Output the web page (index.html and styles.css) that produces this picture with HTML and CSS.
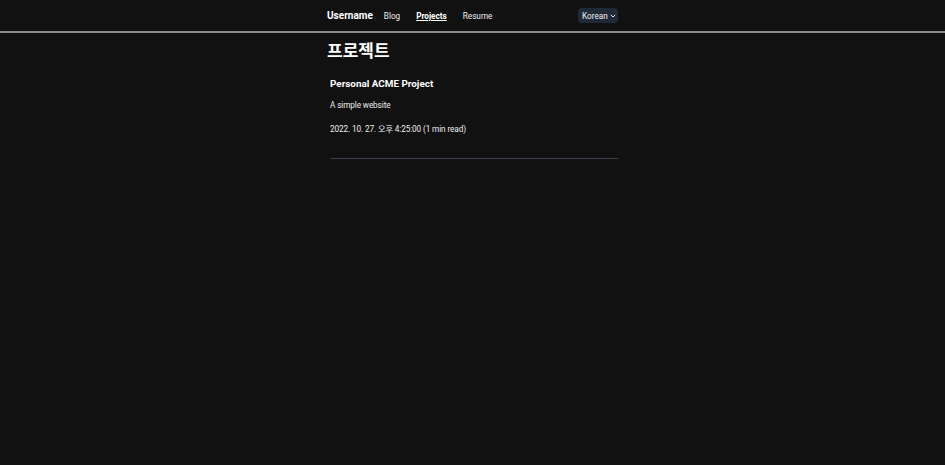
FILE: index.html
```html
<!DOCTYPE html>
<html lang="ko">
<head>
<meta charset="utf-8">
<title>Projects</title>
<link rel="stylesheet" href="styles.css">
</head>
<body>
<header class="header">
  <nav class="nav">
    <div class="nav-left">
      <a class="brand" href="#">Username</a>
      <a class="link" href="#">Blog</a>
      <a class="link active" href="#">Projects</a>
      <a class="link" href="#">Resume</a>
    </div>
    <div class="lang">
      <span>Korean</span>
      <svg class="chev" width="6" height="4" viewBox="0 0 6 4"><path d="M0.8 0.8 L3 3 L5.2 0.8" fill="none" stroke="#e5e7eb" stroke-width="1"/></svg>
    </div>
  </nav>
</header>
<main class="main">
  <h1 class="title">프로젝트</h1>
  <article class="card">
    <h2 class="card-title">Personal ACME Project</h2>
    <p class="desc">A simple website</p>
    <p class="date">2022. 10. 27. 오후 4:25:00 (1 min read)</p>
  </article>
</main>
</body>
</html>
```
FILE: styles.css
```css
* { box-sizing: border-box; }
html, body { margin: 0; padding: 0; }
body {
  background: #111111;
  color: #ececec;
  font-family: Roboto, "Noto Sans CJK KR", sans-serif;
  min-height: 465px;
}
a { color: inherit; text-decoration: none; }
.header {
  border-bottom: 2px solid #8a8a8a;
}
.nav {
  width: 291px;
  margin: 0 auto;
  height: 31px;
  display: flex;
  align-items: center;
  justify-content: space-between;
}
.nav-left { display: flex; align-items: center; }
.brand {
  font-weight: 700;
  font-size: 10px;
  color: #ffffff;
  margin-right: 11px;
}
.link {
  font-size: 8.2px;
  color: #ececec;
  margin-right: 16px;
}
.link.active {
  font-weight: 700;
  text-decoration: underline;
  color: #ffffff;
}
.lang {
  background: #1f2937;
  border-radius: 4px;
  width: 40px;
  height: 15px;
  padding: 0 2px 0 4px;
  display: flex;
  align-items: center;
  justify-content: space-between;
  font-size: 8.2px;
  color: #f0f0f0;
}
.chev { display: block; }
.main {
  width: 291px;
  margin: 0 auto;
}
.title {
  margin: 6px 0 0;
  font-family: "Noto Sans CJK KR", sans-serif;
  font-weight: 700;
  font-size: 17px;
  line-height: 22px;
  color: #ffffff;
}
.card {
  margin-left: 3px;
  padding: 15px 0 22px;
  border-bottom: 1px solid #374151;
}
.card-title {
  margin: 0;
  font-size: 9.9px;
  font-weight: 700;
  line-height: 16px;
  color: #ffffff;
}
.desc {
  margin: 6px 0 0;
  font-size: 8.2px;
  letter-spacing: -0.1px;
  line-height: 14px;
}
.date {
  margin: 10px 0 0;
  font-size: 8.2px;
  letter-spacing: -0.1px;
  line-height: 14px;
}
```
